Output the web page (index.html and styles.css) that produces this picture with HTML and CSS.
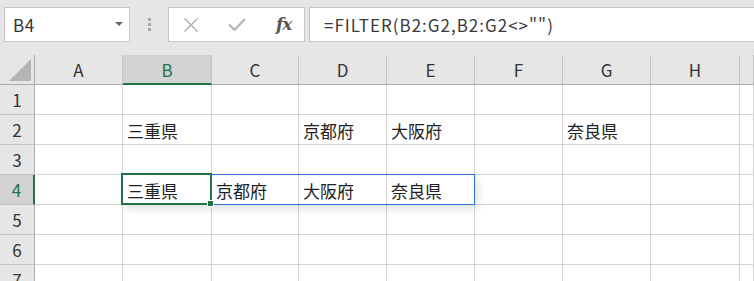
FILE: index.html
```html
<!DOCTYPE html>
<html lang="ja">
<head>
  <meta charset="UTF-8" />
  <title>FILTER</title>
  <link rel="stylesheet" href="styles.css">
</head>
<body>

<div class="toolbar">
  <div class="namebox">
    <span>B4</span>
    <span class="arrow"></span>
  </div>
  <div class="grip"><i></i><i></i><i></i></div>
  <div class="buttons">
    <svg class="icon" width="16" height="14" viewBox="0 0 16 14"><path d="M1.5 0.5 L14.5 13.5 M14.5 0.5 L1.5 13.5" stroke="#b4b4b4" stroke-width="1.6" fill="none"/></svg>
    <svg class="icon" width="18" height="13" viewBox="0 0 18 13"><path d="M1 6.5 L6.5 12 L17 1" stroke="#b4b4b4" stroke-width="2.2" fill="none"/></svg>
    <span class="fx">fx</span>
  </div>
  <div class="formula">=FILTER(B2:G2,B2:G2&lt;&gt;"")</div>
</div>

<div class="sheet">
  <div class="grid">
    <div class="corner"><span class="tri"></span></div>
    <div class="colhead">A</div>
    <div class="colhead active">B</div>
    <div class="colhead">C</div>
    <div class="colhead">D</div>
    <div class="colhead">E</div>
    <div class="colhead">F</div>
    <div class="colhead">G</div>
    <div class="colhead">H</div>
    <div class="colhead"></div>

    <div class="rowhead">1</div>
    <div class="cell"></div><div class="cell"></div><div class="cell"></div><div class="cell"></div>
    <div class="cell"></div><div class="cell"></div><div class="cell"></div><div class="cell"></div><div class="cell"></div>

    <div class="rowhead">2</div>
    <div class="cell"></div><div class="cell">三重県</div><div class="cell"></div><div class="cell">京都府</div>
    <div class="cell">大阪府</div><div class="cell"></div><div class="cell">奈良県</div><div class="cell"></div><div class="cell"></div>

    <div class="rowhead">3</div>
    <div class="cell"></div><div class="cell"></div><div class="cell"></div><div class="cell"></div>
    <div class="cell"></div><div class="cell"></div><div class="cell"></div><div class="cell"></div><div class="cell"></div>

    <div class="rowhead active">4</div>
    <div class="cell"></div><div class="cell">三重県</div><div class="cell">京都府</div><div class="cell">大阪府</div>
    <div class="cell">奈良県</div><div class="cell"></div><div class="cell"></div><div class="cell"></div><div class="cell"></div>

    <div class="rowhead">5</div>
    <div class="cell"></div><div class="cell"></div><div class="cell"></div><div class="cell"></div>
    <div class="cell"></div><div class="cell"></div><div class="cell"></div><div class="cell"></div><div class="cell"></div>

    <div class="rowhead">6</div>
    <div class="cell"></div><div class="cell"></div><div class="cell"></div><div class="cell"></div>
    <div class="cell"></div><div class="cell"></div><div class="cell"></div><div class="cell"></div><div class="cell"></div>

    <div class="rowhead">7</div>
    <div class="cell"></div><div class="cell"></div><div class="cell"></div><div class="cell"></div>
    <div class="cell"></div><div class="cell"></div><div class="cell"></div><div class="cell"></div><div class="cell"></div>
  </div>

  <!-- spill range B4:E4 and active cell -->
  <div class="spill"></div>
  <div class="selected"><span class="handle"></span></div>
</div>

</body>
</html>
```

FILE: styles.css
```css
body {
  margin: 0;
  background-color: #e6e6e6;
  font-family: "Noto Sans CJK JP", "Noto Sans", sans-serif;
  color: #222;
  overflow: hidden;
}

.toolbar {
  display: flex;
  align-items: stretch;
  height: 35px;
  padding: 7px 0 13px 4px;
}

.namebox {
  width: 126px;
  box-sizing: border-box;
  background-color: #fff;
  border: 1px solid #c6c6c6;
  display: flex;
  align-items: center;
  justify-content: space-between;
  padding: 0 6px 0 8px;
  font-size: 17px;
  letter-spacing: 0.5px;
  color: #333;
}

.arrow {
  width: 0;
  height: 0;
  border-left: 4px solid transparent;
  border-right: 4px solid transparent;
  border-top: 4px solid #666;
  margin-top: -2px;
}

.grip {
  width: 38px;
  display: flex;
  flex-direction: column;
  align-items: center;
  justify-content: center;
  gap: 2px;
}

.grip i {
  width: 3px;
  height: 3px;
  background-color: #a8a8a8;
}

.buttons {
  width: 137px;
  box-sizing: border-box;
  background-color: #fff;
  border: 1px solid #c6c6c6;
  display: flex;
  align-items: center;
  padding: 0 0 0 14px;
}

.icon {
  margin-right: 29px;
}

.buttons .icon + .icon {
  margin-right: 30px;
}

.fx {
  font-family: "DejaVu Serif", "Liberation Serif", serif;
  font-style: italic;
  font-weight: bold;
  font-size: 17px;
  color: #555;
  letter-spacing: -1px;
  margin-top: -2px;
}

.formula {
  flex: 1;
  margin-left: 4px;
  background-color: #fff;
  border: 1px solid #c6c6c6;
  border-right: none;
  display: flex;
  align-items: center;
  padding-left: 14px;
  font-size: 17px;
  letter-spacing: 1px;
  color: #3a3a3a;
}

.sheet {
  position: relative;
}

.grid {
  display: grid;
  grid-template-columns: 35px 88px 89px 87px 88px 88px 88px 88px 89px 1fr;
  grid-auto-rows: 30px;
}

.grid > div {
  box-sizing: border-box;
}

.corner {
  border-right: 1px solid #ababab;
  border-bottom: 1px solid #ababab;
  position: relative;
}

.tri {
  position: absolute;
  left: 9px;
  top: 4px;
  width: 0;
  height: 0;
  border-left: 22px solid transparent;
  border-bottom: 22px solid #b4b4b4;
}

.colhead {
  border-right: 1px solid #c4c4c4;
  border-bottom: 1px solid #ababab;
  display: flex;
  align-items: center;
  justify-content: center;
  font-size: 17px;
  color: #333;
}

.colhead.active {
  background-color: #d2d2d2;
  color: #217346;
  border-bottom: 2px solid #217346;
}

.rowhead {
  border-right: 1px solid #ababab;
  border-bottom: 1px solid #c4c4c4;
  display: flex;
  align-items: center;
  justify-content: center;
  font-size: 17px;
  color: #333;
}

.rowhead.active {
  background-color: #d2d2d2;
  color: #217346;
  border-right: 2px solid #217346;
}

.cell {
  background-color: #fff;
  border-right: 1px solid #d4d4d4;
  border-bottom: 1px solid #d4d4d4;
  padding: 2px 0 0 4px;
  display: flex;
  align-items: center;
  font-size: 17px;
  white-space: nowrap;
  color: #222;
}

.spill {
  position: absolute;
  left: 122px;
  top: 119px;
  width: 353px;
  height: 31px;
  box-sizing: border-box;
  border: 1px solid #2e6fd6;
  box-shadow: 3px 4px 8px rgba(0, 0, 0, 0.12);
}

.selected {
  position: absolute;
  left: 121px;
  top: 118px;
  width: 91px;
  height: 32px;
  box-sizing: border-box;
  border: 2px solid #217346;
}

.handle {
  position: absolute;
  right: -4px;
  bottom: -4px;
  width: 5px;
  height: 5px;
  background-color: #217346;
  border: 1px solid #fff;
}
```
